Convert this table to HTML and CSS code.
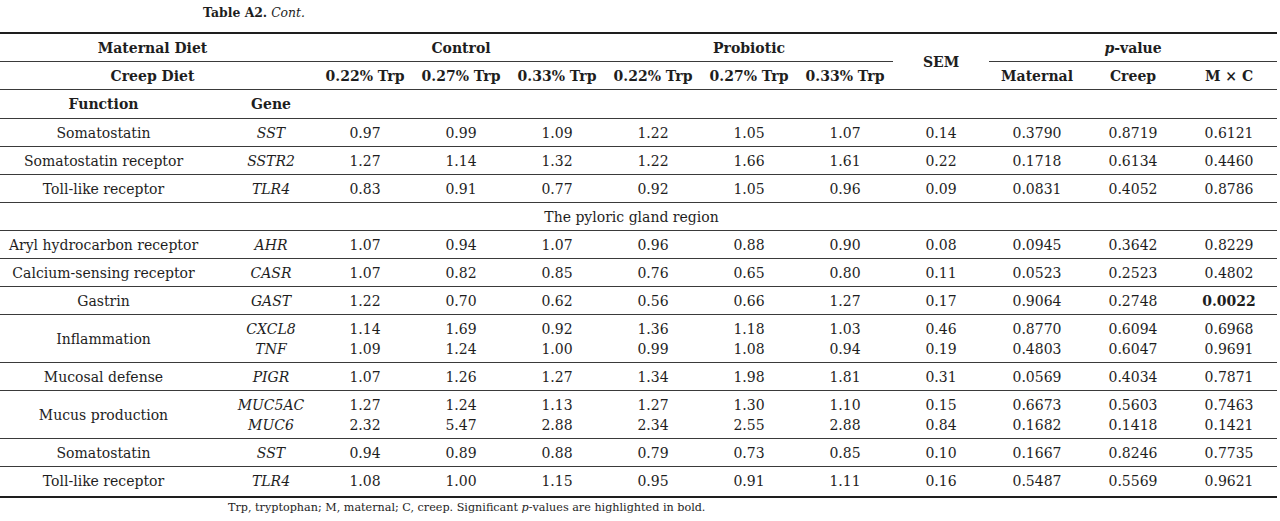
FILE: index.html
```html
<!DOCTYPE html>
<html>
<head>
<meta charset="utf-8">
<link rel="stylesheet" href="styles.css">
</head>
<body>
<div class="page">
  <p class="caption"><b>Table A2.</b> <i>Cont.</i></p>
  <table class="data">
    <colgroup>
      <col class="c-func"><col class="c-gene">
      <col class="c-num"><col class="c-num"><col class="c-num"><col class="c-num"><col class="c-num">
      <col class="c-num"><col class="c-num"><col class="c-num"><col class="c-num"><col class="c-num">
    </colgroup>
    <thead>
      <tr class="h1">
        <th colspan="2" class="lead">Maternal Diet</th>
        <th colspan="3">Control</th>
        <th colspan="3">Probiotic</th>
        <th rowspan="2" class="sem">SEM</th>
        <th colspan="3"><i>p</i>-value</th>
      </tr>
      <tr class="h2">
        <th colspan="2" class="lead">Creep Diet</th>
        <th>0.22% Trp</th><th>0.27% Trp</th><th>0.33% Trp</th>
        <th>0.22% Trp</th><th>0.27% Trp</th><th>0.33% Trp</th>
        <th>Maternal</th><th>Creep</th><th>M × C</th>
      </tr>
      <tr class="h3">
        <th class="func">Function</th><th>Gene</th>
        <th></th><th></th><th></th><th></th><th></th><th></th><th></th><th></th><th></th><th></th>
      </tr>
    </thead>
    <tbody>
      <tr><td class="func">Somatostatin</td><td class="gene">SST</td><td>0.97</td><td>0.99</td><td>1.09</td><td>1.22</td><td>1.05</td><td>1.07</td><td>0.14</td><td>0.3790</td><td>0.8719</td><td>0.6121</td></tr>
      <tr><td class="func">Somatostatin receptor</td><td class="gene">SSTR2</td><td>1.27</td><td>1.14</td><td>1.32</td><td>1.22</td><td>1.66</td><td>1.61</td><td>0.22</td><td>0.1718</td><td>0.6134</td><td>0.4460</td></tr>
      <tr><td class="func">Toll-like receptor</td><td class="gene">TLR4</td><td>0.83</td><td>0.91</td><td>0.77</td><td>0.92</td><td>1.05</td><td>0.96</td><td>0.09</td><td>0.0831</td><td>0.4052</td><td>0.8786</td></tr>
      <tr><td colspan="12" class="section">The pyloric gland region</td></tr>
      <tr><td class="func">Aryl hydrocarbon receptor</td><td class="gene">AHR</td><td>1.07</td><td>0.94</td><td>1.07</td><td>0.96</td><td>0.88</td><td>0.90</td><td>0.08</td><td>0.0945</td><td>0.3642</td><td>0.8229</td></tr>
      <tr><td class="func">Calcium-sensing receptor</td><td class="gene">CASR</td><td>1.07</td><td>0.82</td><td>0.85</td><td>0.76</td><td>0.65</td><td>0.80</td><td>0.11</td><td>0.0523</td><td>0.2523</td><td>0.4802</td></tr>
      <tr><td class="func">Gastrin</td><td class="gene">GAST</td><td>1.22</td><td>0.70</td><td>0.62</td><td>0.56</td><td>0.66</td><td>1.27</td><td>0.17</td><td>0.9064</td><td>0.2748</td><td><b>0.0022</b></td></tr>
      <tr><td class="func">Inflammation</td><td class="gene">CXCL8<br>TNF</td><td>1.14<br>1.09</td><td>1.69<br>1.24</td><td>0.92<br>1.00</td><td>1.36<br>0.99</td><td>1.18<br>1.08</td><td>1.03<br>0.94</td><td>0.46<br>0.19</td><td>0.8770<br>0.4803</td><td>0.6094<br>0.6047</td><td>0.6968<br>0.9691</td></tr>
      <tr><td class="func">Mucosal defense</td><td class="gene">PIGR</td><td>1.07</td><td>1.26</td><td>1.27</td><td>1.34</td><td>1.98</td><td>1.81</td><td>0.31</td><td>0.0569</td><td>0.4034</td><td>0.7871</td></tr>
      <tr><td class="func">Mucus production</td><td class="gene">MUC5AC<br>MUC6</td><td>1.27<br>2.32</td><td>1.24<br>5.47</td><td>1.13<br>2.88</td><td>1.27<br>2.34</td><td>1.30<br>2.55</td><td>1.10<br>2.88</td><td>0.15<br>0.84</td><td>0.6673<br>0.1682</td><td>0.5603<br>0.1418</td><td>0.7463<br>0.1421</td></tr>
      <tr><td class="func">Somatostatin</td><td class="gene">SST</td><td>0.94</td><td>0.89</td><td>0.88</td><td>0.79</td><td>0.73</td><td>0.85</td><td>0.10</td><td>0.1667</td><td>0.8246</td><td>0.7735</td></tr>
      <tr class="last"><td class="func">Toll-like receptor</td><td class="gene">TLR4</td><td>1.08</td><td>1.00</td><td>1.15</td><td>0.95</td><td>0.91</td><td>1.11</td><td>0.16</td><td>0.5487</td><td>0.5569</td><td>0.9621</td></tr>
    </tbody>
  </table>
  <p class="note">Trp, tryptophan; M, maternal; C, creep. Significant <i>p</i>-values are highlighted in bold.</p>
</div>
</body>
</html>
```

FILE: styles.css
```css
html, body {
  margin: 0;
  padding: 0;
  background: #fff;
}

.page {
  width: 1280px;
  font-family: "DejaVu Serif", "Liberation Serif", serif;
  color: #1e1e1e;
}

.caption {
  margin: 0;
  padding: 6px 0 0 203px;
  height: 32px;
  box-sizing: border-box;
  font-size: 12.4px;
  line-height: 14px;
}

.data {
  width: 1277px;
  table-layout: fixed;
  border-collapse: collapse;
  border-top: 2px solid #1e1e1e;
  border-bottom: 2px solid #1e1e1e;
  font-size: 14px;
}

.c-func { width: 225px; }
.c-gene { width: 92px; }
.c-num { width: 96px; }

.data th,
.data td {
  padding: 4px 0 3px 0;
  line-height: 20px;
  text-align: center;
  vertical-align: middle;
  white-space: nowrap;
}

.data th {
  font-weight: bold;
}

.data tr {
  border-bottom: 1px solid #3a3a3a;
}

.data thead tr.h1 th {
  border-bottom: 1px solid #3a3a3a;
}

.data thead tr.h1 th.sem {
  border-bottom: none;
}

.data tr.h1 {
  border-bottom: none;
}

.data tr.h3 th {
  padding-bottom: 4px;
}

.data th.lead {
  padding-right: 12px;
}

.data .func {
  padding-right: 18px;
}

.data .section {
  padding-right: 14px;
}

.data .gene {
  font-style: italic;
}

.data tr.last {
  border-bottom: none;
}

.data tr.last td {
  padding-bottom: 5px;
}

.note {
  margin: 0;
  padding: 3px 0 0 228px;
  font-size: 11.2px;
  line-height: 14px;
}
```
